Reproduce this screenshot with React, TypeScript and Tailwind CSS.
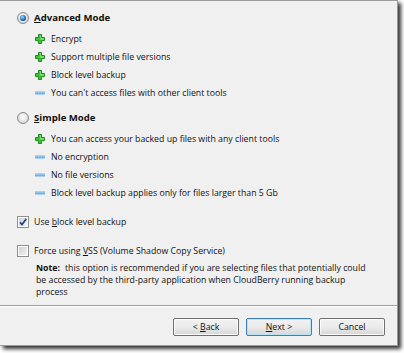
import React from "react";

const font = { fontFamily: '"Open Sans", "Noto Sans", Arial, sans-serif' };

function Plus() {
  return (
    <svg width="10" height="10" viewBox="0 0 10 10" className="shrink-0">
      <path d="M3.5 0.5h3v3h3v3h-3v3h-3v-3h-3v-3h3z" fill="#3fc43a" stroke="#1f8a1c" strokeWidth="1" />
      <path d="M4.5 1.5h1v3h3v1h-3v0" fill="none" stroke="#9ff09a" strokeWidth="0.6" />
    </svg>
  );
}

function Minus() {
  return (
    <svg width="10" height="10" viewBox="0 0 10 10" className="shrink-0">
      <rect x="0" y="3.5" width="10" height="3" fill="#6fb3e6" />
      <rect x="0" y="3.5" width="10" height="1" fill="#a9d6f5" />
    </svg>
  );
}

function Radio({ checked }: { checked?: boolean }) {
  return (
    <svg width="12" height="12" viewBox="0 0 12 12" className="shrink-0">
      <defs>
        <radialGradient id="rbg" cx="50%" cy="40%" r="60%">
          <stop offset="0%" stopColor="#ffffff" />
          <stop offset="100%" stopColor="#d4d4d4" />
        </radialGradient>
        <radialGradient id="dot" cx="40%" cy="35%" r="70%">
          <stop offset="0%" stopColor="#9fe0ff" />
          <stop offset="60%" stopColor="#2a7fc4" />
          <stop offset="100%" stopColor="#0c3d73" />
        </radialGradient>
      </defs>
      <circle cx="6" cy="6" r="5.5" fill="url(#rbg)" stroke="#8a8a8a" strokeWidth="1" />
      {checked && <circle cx="6" cy="6" r="3" fill="url(#dot)" />}
    </svg>
  );
}

function Check({ checked }: { checked?: boolean }) {
  return (
    <svg width="12" height="12" viewBox="0 0 12 12" className="shrink-0">
      <defs>
        <linearGradient id="cbg" x1="0" y1="0" x2="1" y2="1">
          <stop offset="0%" stopColor="#cfcfcf" />
          <stop offset="100%" stopColor="#f4f4f4" />
        </linearGradient>
      </defs>
      <rect x="0.5" y="0.5" width="11" height="11" fill="#ffffff" stroke="#8e8f8f" />
      <rect x="2" y="2" width="8" height="8" fill="url(#cbg)" />
      {checked && (
        <path d="M3 6.2 L5 8.6 L9.3 2.8" fill="none" stroke="#1c3f95" strokeWidth="1.6" />
      )}
    </svg>
  );
}

function Item({ plus, children }: { plus?: boolean; children: React.ReactNode }) {
  return (
    <div className="flex h-[18px] items-center gap-[6px] pl-[18px]">
      {plus ? <Plus /> : <Minus />}
      <span>{children}</span>
    </div>
  );
}

function Btn({ children, focused }: { children: React.ReactNode; focused?: boolean }) {
  return (
    <div
      className={
        "flex h-[18px] w-[66px] items-center justify-center rounded-[2px] border bg-gradient-to-b from-[#f2f2f2] via-[#ebebeb] to-[#d6d6d6] text-[8.75px] " +
        (focused ? "border-[#3c7fb1] shadow-[inset_0_0_0_1px_#b6e4f7]" : "border-[#707070] shadow-[inset_0_0_0_1px_#fcfcfc]")
      }
    >
      {children}
    </div>
  );
}

export default function App() {
  return (
    <div className="h-[353px] w-[404px] bg-white" style={font}>
      <div className="flex h-[346px] w-[398px] flex-col border-t border-r border-b border-[#9a9a9a] bg-[#f0f0f0] text-[8.75px] leading-none text-[#111] shadow-[3px_3px_4px_rgba(0,0,0,0.8)]">
        <div className="flex flex-1 flex-col pl-[17px] pt-[10px]">
          <div className="flex h-[14px] items-center gap-[5px]">
            <Radio checked />
            <span className="text-[9.6px] font-bold"><u>A</u>dvanced Mode</span>
          </div>
          <div className="mt-[5px]">
            <Item plus>Encrypt</Item>
            <Item plus>Support multiple file versions</Item>
            <Item plus>Block level backup</Item>
            <Item>You can't access files with other client tools</Item>
          </div>
          <div className="mt-[9px] flex h-[14px] items-center gap-[5px]">
            <Radio />
            <span className="text-[9.6px] font-bold"><u>S</u>imple Mode</span>
          </div>
          <div className="mt-[5px]">
            <Item plus>You can access your backed up files with any client tools</Item>
            <Item>No encryption</Item>
            <Item>No file versions</Item>
            <Item>Block level backup applies only for files larger than 5 Gb</Item>
          </div>
          <div className="mt-[13px] flex h-[14px] items-center gap-[5px]">
            <Check checked />
            <span>Use <u>b</u>lock level backup</span>
          </div>
          <div className="mt-[15px] flex h-[14px] items-center gap-[5px]">
            <Check />
            <span>Force using <u>V</u>SS (Volume Shadow Copy Service)</span>
          </div>
          <p className="mt-[4px] pl-[19px] pr-[20px] leading-[12px]">
            <b className="mr-[5px]">Note:</b>this option is recommended if you are selecting files that potentially could be accessed by the third-party application when CloudBerry running backup process
          </p>
        </div>
        <div className="h-[2px] border-t border-[#a0a0a0] bg-white" />
        <div className="flex h-[38px] items-center justify-end gap-[7px] pr-[12px] pt-[2px]">
          <Btn>&lt;&nbsp;<u>B</u>ack</Btn>
          <Btn focused><u>N</u>ext &gt;</Btn>
          <Btn>Cancel</Btn>
        </div>
      </div>
    </div>
  );
}
